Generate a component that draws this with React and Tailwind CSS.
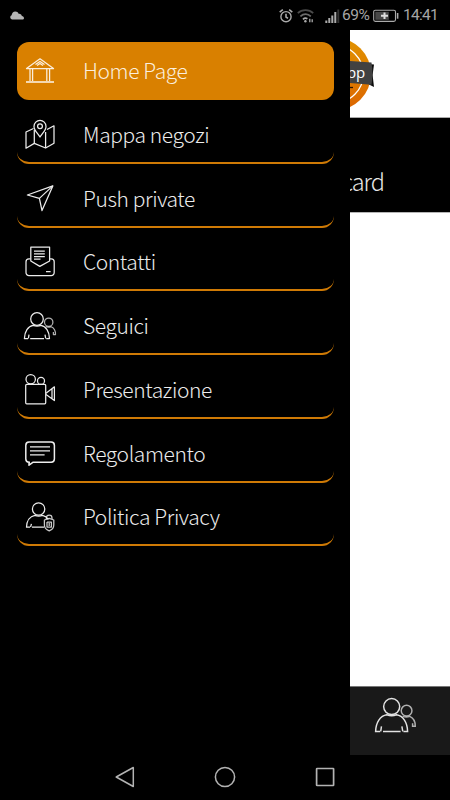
import { clsx } from "clsx";

const HomeIcon = () => (
  <>
    <path d="M20 7.8 L33.5 17.6 H6.5 Z" />
    <path d="M15.5 13.5 L20 10.5 L24.5 13.5 M17 14.5 L20 12.5 L23 14.5" />
    <path d="M10 18 V30 M12.6 18 V30 M26.8 18 V30 M29.6 18 V30" />
    <path d="M6 31 H34" strokeWidth="1.6" />
  </>
);

const MapIcon = () => (
  <>
    <path d="M13.5 13.5 L6 17 V33.2 L14.3 28.4 L25.6 33 L34 28.2 V10.8 L27 14.5" />
    <path d="M14.3 15 V28.4 M25.6 17 V33" />
    <path d="M20 22 C18 18.5 14 15.5 14 11.4 A6 6 0 0 1 26 11.4 C26 15.5 22 18.5 20 22 Z" />
    <circle cx="20" cy="11.3" r="2.4" />
  </>
);

const PlaneIcon = () => (
  <>
    <path d="M32.8 6.9 L7.4 16 L19.4 19.4 L22 31.6 Z" />
    <path d="M32.8 6.9 L19.4 19.4" />
  </>
);

const ContactIcon = () => (
  <>
    <path d="M10.8 19 V5.2 H29.6 V19 L19.8 24.4 Z" />
    <path d="M10.5 16.8 H9 A3 3 0 0 0 6 19.8 V30.6 A3 3 0 0 0 9 33.6 H31.2 A3 3 0 0 0 34.2 30.6 V19.8 A3 3 0 0 0 31.2 16.8 H30" />
    <path d="M14 9 H24.8 M14 11.8 H24.8 M14 14.6 H24.8 M14 17.2 H20.5 M26 29.6 H30.6" />
  </>
);

const PeopleIcon = () => (
  <>
    <circle cx="17" cy="13" r="6.3" />
    <path d="M8 32.5 H4.4 C4.6 25.5 8 20.2 13.2 19.4 C15.5 20.3 18.5 20.3 20.8 19.4 C26 20.2 29.3 25.5 29.5 32.5 H26.2" />
    <path d="M10.2 32.5 H24 M9 28.6 L8.4 32.5 M25 28.6 L25.7 32.5" />
    <g strokeOpacity="0.75">
      <circle cx="28.7" cy="16.2" r="4.2" />
      <path d="M25.6 20.7 C27.5 21.3 29.5 21.3 31.2 20.7 C34.2 22 35.6 25 35.5 28.5 H33.4 V26" />
    </g>
  </>
);

const CameraIcon = () => (
  <>
    <circle cx="10.7" cy="9.2" r="4.7" />
    <circle cx="21" cy="10.9" r="3.5" />
    <rect x="5.7" y="14.4" width="20" height="19.4" rx="1" />
    <path d="M26 23.3 L34.4 16.8 V30.6 L26 24.6 M32 19 V28.5" />
  </>
);

const ChatIcon = () => (
  <>
    <path d="M10 28.2 H9 A3.3 3.3 0 0 1 5.8 25 V11.4 A3.3 3.3 0 0 1 9 8.1 H31.2 A3.3 3.3 0 0 1 34.4 11.4 V25 A3.3 3.3 0 0 1 31.2 28.2 H13.2 L9 31.2 V28.2" strokeWidth="1.5" />
    <path d="M10 12.9 H30 M10 16.9 H30 M10 20.9 H24.6" strokeWidth="1.4" />
  </>
);

const PrivacyIcon = () => (
  <>
    <circle cx="18.6" cy="12" r="6.2" />
    <path d="M10 30.2 H6.5 C6.7 23.8 10 19.2 14.8 18.3 C17.2 19.2 20.2 19.2 22.5 18.3 C25 18.8 27 20.3 28.4 22.4" />
    <path d="M12 30.2 H24 M11.4 26.8 L10.6 30.2" />
    <g strokeOpacity="0.85">
      <path d="M29.2 21.4 L33.8 23 V28 C33.8 31 32 32.8 29.2 33.8 C26.4 32.8 24.4 31 24.4 28 V23 Z" />
      <path d="M26.4 22 V21 A2.8 2.8 0 0 1 32 21 V22 M27 25 V30 H31.4 V25 H27 M29.2 26 V29" />
    </g>
  </>
);

const menuItems = [
  { label: "Home Page", icon: HomeIcon, active: true },
  { label: "Mappa negozi", icon: MapIcon },
  { label: "Push private", icon: PlaneIcon },
  { label: "Contatti", icon: ContactIcon },
  { label: "Seguici", icon: PeopleIcon },
  { label: "Presentazione", icon: CameraIcon },
  { label: "Regolamento", icon: ChatIcon },
  { label: "Politica Privacy", icon: PrivacyIcon },
];

const StatusBar = () => (
  <header className="flex h-[30px] shrink-0 items-center justify-between bg-black pl-[10px] pr-[11px] font-['Roboto',sans-serif] text-[15.5px] font-normal text-[#a6a6a6]">
    <svg width="14" height="9" viewBox="0 0 14 9" fill="#b5b5b5">
      <path d="M2 8.5 A2.2 2.2 0 0 1 1.6 4.3 C2 2 3.3 0.6 5.3 0.6 C7 0.6 8 1.5 8.6 2.8 C10.5 2.6 11.6 3.6 11.8 5 C13.2 5.2 14 6.2 14 7 C14 8 13.2 8.5 12.3 8.5 Z" />
    </svg>
    <div className="flex items-center pt-px">
      <svg width="61" height="20" viewBox="0 0 61 20" fill="none" stroke="#ababab" strokeWidth="1.4">
        <circle cx="7" cy="10.7" r="5.1" />
        <path d="M7 7.8 V11 L9 12.4 M0.7 6.2 L3.8 3.7 M13.3 6.2 L10.2 3.7" strokeWidth="1.6" />
        <path d="M18.8 7.2 C23 3.2 30 3.2 34.2 7.2" stroke="#4b4b4b" strokeWidth="1.7" />
        <path d="M21.4 10.4 C24.5 7.4 28.8 7.4 31.8 10.4" stroke="#6b6b6b" strokeWidth="1.7" />
        <path d="M24 13.3 C25.5 11.8 27 11.8 28.4 12.8" strokeWidth="1.7" />
        <circle cx="26.4" cy="15.2" r="1.2" fill="#ababab" stroke="none" />
        <path d="M30.8 12.8 V16.2 M33.2 13.2 V16.2" strokeWidth="1.3" />
        <path d="M47.3 14.5 V17 M50.3 12 V17 M53.3 9.5 V17 M56.3 6 V17" strokeWidth="2" />
        <path d="M59.3 3.5 V17" stroke="#333" strokeWidth="1.9" />
      </svg>
      <span className="ml-[2px] w-[28px] whitespace-nowrap tracking-[-0.4px]">69%</span>
      <svg className="ml-[3px]" width="26" height="14" viewBox="0 0 26 14">
        <rect x="0.7" y="1.2" width="21.8" height="11.2" rx="1.6" fill="none" stroke="#aaa" strokeWidth="1.1" />
        <rect x="2.3" y="2.8" width="13.5" height="8" fill="#484848" />
        <path d="M8 6.8 H15 M11.5 3.5 V10.1" stroke="#ddd" strokeWidth="2" />
        <path d="M24.6 4 V9.7" stroke="#aaa" strokeWidth="1.6" />
      </svg>
      <span className="ml-[4px] w-[36px] whitespace-nowrap tracking-[-0.7px]">14:41</span>
    </div>
  </header>
);

const MenuItem = ({ item }) => {
  const Icon = item.icon;
  return (
    <li
      className={clsx(
        "flex h-[58px] items-center rounded-xl pl-[3px] text-[21px] tracking-[-0.4px]",
        item.active
          ? "bg-[#d98000] text-[#fbeedd]"
          : "border-b-2 border-[#cf7a05] pt-[2px] text-[#ececec]"
      )}
    >
      <svg className="shrink-0" width="40" height="40" viewBox="0 0 40 40" fill="none" stroke="currentColor" strokeWidth="1.25" strokeLinejoin="round">
        <Icon />
      </svg>
      <span className="ml-[23px] whitespace-nowrap pb-[2px] leading-[30px]">{item.label}</span>
    </li>
  );
};

const Badge = () => (
  <svg className="block" width="100" height="87" viewBox="350 30 100 87">
    <defs>
      <linearGradient id="seal" x1="0" y1="0" x2="0" y2="1">
        <stop offset="0" stopColor="#e19300" />
        <stop offset="1" stopColor="#dc6500" />
      </linearGradient>
    </defs>
    <circle cx="334.6" cy="74" r="36.4" fill="url(#seal)" />
    <circle cx="334.6" cy="74" r="28.7" fill="none" stroke="#fff" strokeWidth="1.3" />
    <path d="M350 87.5 H353" stroke="#2b1600" strokeWidth="1.3" />
    <path d="M368 64 L374 64.4 L372.6 75 L374 87 L369 84.5 Z" fill="#0b0b0b" />
    <path d="M350 61 L371.5 62.5 Q373.5 74 371.5 84.8 L350 83 Z" fill="#414141" />
    <text x="365.3" y="77.6" textAnchor="end" fill="#fff" fontSize="15" fontWeight="400" fontFamily="Open Sans, sans-serif">
      app
    </text>
  </svg>
);

const Drawer = () => (
  <nav className="w-[350px] shrink-0 bg-black pl-[17px] pr-4 pt-3">
    <ul className="flex flex-col gap-[5.75px]">
      {menuItems.map((item) => (
        <MenuItem key={item.label} item={item} />
      ))}
    </ul>
  </nav>
);

const Page = () => (
  <main className="flex w-[100px] flex-col overflow-hidden bg-white">
    <div className="h-[88px] shrink-0 border-b border-[#aaa]">
      <Badge />
    </div>
    <div className="flex h-[95px] shrink-0 items-end justify-end border-b border-[#b5b5b5] bg-black pb-[15px] pr-[66px]">
      <span className="whitespace-nowrap text-[23.5px] leading-8 tracking-[-1px] text-[#e6e6e6]">card</span>
    </div>
    <div className="flex-1" />
    <footer className="h-[69px] shrink-0 border-t border-[#777] bg-[#191919] pl-5 pt-[3px]">
      <svg width="51" height="51" viewBox="0 0 40 40" fill="none" stroke="#e3e3e3" strokeWidth="1.15">
        <PeopleIcon />
      </svg>
    </footer>
  </main>
);

const NavBar = () => (
  <footer className="flex h-[45px] shrink-0 items-center justify-between bg-black px-[114px] pb-px">
    <svg width="22" height="22" viewBox="0 0 22 22" fill="none" stroke="#b3b3b3" strokeWidth="1.5" strokeLinejoin="round">
      <path d="M2.2 11 L19.3 1.5 V20.5 Z" />
    </svg>
    <svg width="22" height="22" viewBox="0 0 22 22" fill="none" stroke="#b3b3b3" strokeWidth="1.5">
      <circle cx="11" cy="11" r="9.6" />
    </svg>
    <svg width="22" height="22" viewBox="0 0 22 22" fill="none" stroke="#b3b3b3" strokeWidth="1.7">
      <rect x="2.6" y="2.5" width="17" height="17" rx="0.5" />
    </svg>
  </footer>
);

const App = () => {
  return (
    <div className="flex h-[800px] w-[450px] flex-col overflow-hidden bg-black font-['Noto_Sans_CJK_SC',sans-serif] font-light">
      <StatusBar />
      <div className="flex min-h-0 flex-1">
        <Drawer />
        <Page />
      </div>
      <NavBar />
    </div>
  );
};

export default App;
